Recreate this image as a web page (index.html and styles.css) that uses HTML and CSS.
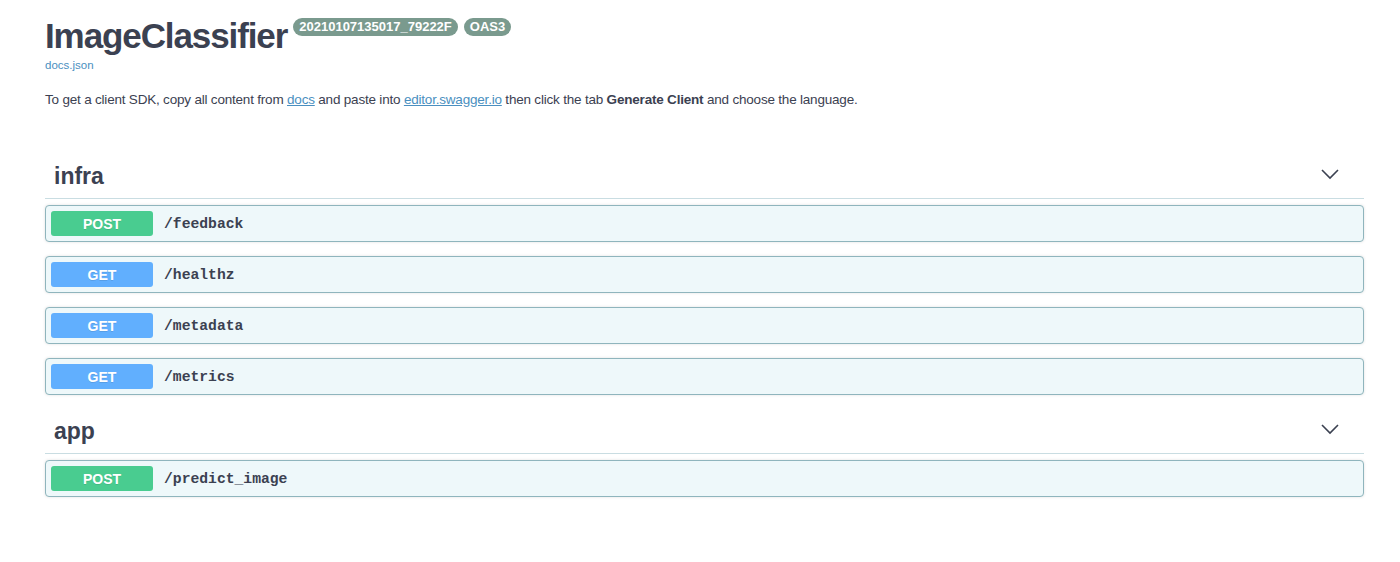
FILE: index.html
```html
<!DOCTYPE html>
<html>
<head>
<meta charset="utf-8">
<link rel="stylesheet" href="styles.css">
</head>
<body>
<div class="wrap">
  <div class="info">
    <div class="title-row">
      <h2 class="title">ImageClassifier</h2>
      <span class="badge">20210107135017_79222F</span>
      <span class="badge">OAS3</span>
    </div>
    <a class="url" href="#">docs.json</a>
    <p class="desc">To get a client SDK, copy all content from <a href="#">docs</a> and paste into <a href="#">editor.swagger.io</a> then click the tab <b>Generate Client</b> and choose the language.</p>
  </div>

  <section class="tag-section">
    <div class="tag">
      <h3>infra</h3>
      <svg class="chev" width="20" height="20" viewBox="0 0 20 20"><path d="M2 6 L10 14 L18 6" fill="none" stroke="#3b4151" stroke-width="1.6"/></svg>
    </div>
    <div class="op"><span class="method post">POST</span><span class="path">/feedback</span></div>
    <div class="op"><span class="method get">GET</span><span class="path">/healthz</span></div>
    <div class="op"><span class="method get">GET</span><span class="path">/metadata</span></div>
    <div class="op"><span class="method get">GET</span><span class="path">/metrics</span></div>
  </section>

  <section class="tag-section">
    <div class="tag">
      <h3>app</h3>
      <svg class="chev" width="20" height="20" viewBox="0 0 20 20"><path d="M2 6 L10 14 L18 6" fill="none" stroke="#3b4151" stroke-width="1.6"/></svg>
    </div>
    <div class="op"><span class="method post">POST</span><span class="path">/predict_image</span></div>
  </section>
</div>
</body>
</html>
```

FILE: styles.css
```css
* { box-sizing: border-box; }
html, body { margin: 0; padding: 0; background: #fff; }
body { font-family: "Liberation Sans", Arial, sans-serif; color: #3b4151; }
.wrap { padding: 18px 36px 0 45px; }
.title-row { display: flex; align-items: flex-start; gap: 6px; }
.title { margin: 0; font-size: 35px; line-height: 36px; font-weight: 700; letter-spacing: -1.1px; color: #3b4151; }
.badge { background: #7a9a8e; color: #fff; font-size: 13px; font-weight: 700; line-height: 14px; padding: 2px 6px; border-radius: 57px; }
.url { display: block; margin-top: 4px; font-size: 11.5px; line-height: 14px; color: #4a8fc0; text-decoration: none; }
.desc { margin: 19px 0 0; font-size: 13.5px; line-height: 17px; letter-spacing: -0.2px; color: #3b4151; }
.desc a { color: #4a8fc0; text-decoration: underline; }
.tag-section:first-of-type { margin-top: 46px; }
.tag { display: flex; align-items: center; justify-content: space-between; height: 45px; border-bottom: 1px solid #c9dde2; padding-left: 9px; margin-bottom: 6px; }
.tag h3 { margin: 0; font-size: 23px; font-weight: 700; line-height: 28px; color: #3b4151; }
.chev { margin-right: 24px; margin-top: -4px; }
.op { display: flex; align-items: center; height: 37px; margin-bottom: 14px; border: 1px solid #8fb5bd; border-radius: 4px; background: #eef8fa; padding: 0 5px; box-shadow: 0 0 3px rgba(0,0,0,.12); }
.method { width: 102px; height: 25px; border-radius: 3px; color: #fff; font-size: 14px; font-weight: 700; display: flex; align-items: center; justify-content: center; text-shadow: 0 1px 0 rgba(0,0,0,.1); }
.method.post { background: #49cc90; }
.method.get { background: #61affe; }
.path { margin-left: 11px; font-family: "Liberation Mono", "Courier New", monospace; font-size: 14.7px; font-weight: 700; color: #3b4151; }
```
